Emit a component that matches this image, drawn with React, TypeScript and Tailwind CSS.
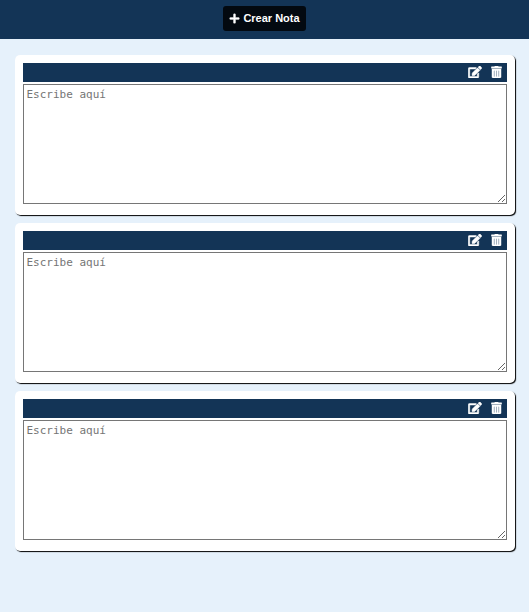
import { useState } from "react";
import { FaEdit, FaPlus, FaTrashAlt } from "react-icons/fa";

type NoteProps = { id: number; onDelete: (id: number) => void };

function Note({ id, onDelete }: NoteProps) {
  const [editable, setEditable] = useState(true);

  return (
    <article className="rounded-[5px] bg-white px-2 pt-2 pb-[11px] shadow-[1px_1px_1px_#000]">
      <div className="flex h-[19px] items-center justify-end gap-[9px] bg-[#133456] pr-[5px] pb-px text-white">
        <button type="button" aria-label="Editar nota" onClick={() => setEditable(!editable)}>
          <FaEdit className="h-3 w-[14px] stroke-white stroke-[20]" />
        </button>
        <button type="button" aria-label="Eliminar nota" onClick={() => onDelete(id)}>
          <FaTrashAlt className="h-3 w-[11px] stroke-white stroke-[20]" />
        </button>
      </div>
      <textarea
        aria-label="Nota"
        placeholder="Escribe aquí"
        readOnly={!editable}
        className="mt-0.5 block h-[120px] w-full resize border border-[#767676] bg-white px-[3px] py-[3px] font-['DejaVu_Sans_Mono',monospace] text-[11px] leading-[13px] text-black outline-none placeholder:text-[#757575]"
      />
    </article>
  );
}

export default function App() {
  const [notes, setNotes] = useState([1, 2, 3]);

  return (
    <div className="min-h-screen bg-[#e6f1fb] font-['Liberation_Sans',Arial,sans-serif]">
      <header className="flex h-[39px] justify-center bg-[#133456] pt-1.5">
        <button
          type="button"
          onClick={() => setNotes([...notes, Math.max(0, ...notes) + 1])}
          className="flex h-[25px] items-center gap-[3px] rounded-[3px] bg-[#030910] px-1.5 text-[11px] font-bold text-white"
        >
          <FaPlus className="size-[11px] stroke-white stroke-[16]" />
          Crear Nota
        </button>
      </header>
      <main className="mx-auto flex max-w-[500px] flex-col gap-2 pt-4">
        {notes.map((id) => (
          <Note key={id} id={id} onDelete={(gone) => setNotes(notes.filter((n) => n !== gone))} />
        ))}
      </main>
    </div>
  );
}
